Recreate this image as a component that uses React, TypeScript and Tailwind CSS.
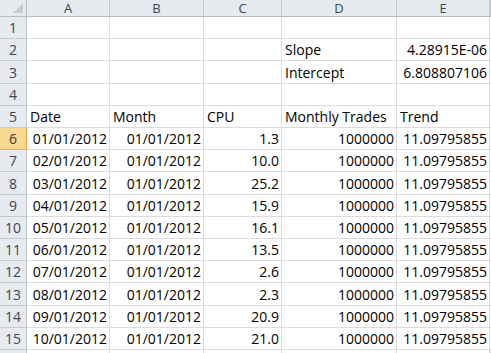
const cols = "grid grid-cols-[27px_83px_94px_78px_115px_93px_1fr]";

type Cell = { v: string; right?: boolean };

const rows: { h: string; cells: Cell[] }[] = [
  { h: "h-[22px]", cells: [] },
  { h: "h-[22px]", cells: [{ v: "" }, { v: "" }, { v: "" }, { v: "Slope" }, { v: "4.28915E-06", right: true }] },
  { h: "h-[23px]", cells: [{ v: "" }, { v: "" }, { v: "" }, { v: "Intercept" }, { v: "6.808807106", right: true }] },
  { h: "h-[22px]", cells: [] },
  { h: "h-[22px]", cells: [{ v: "Date" }, { v: "Month" }, { v: "CPU" }, { v: "Monthly Trades" }, { v: "Trend" }] },
];

const data = [
  ["01/01/2012", "1.3"],
  ["02/01/2012", "10.0"],
  ["03/01/2012", "25.2"],
  ["04/01/2012", "15.9"],
  ["05/01/2012", "16.1"],
  ["06/01/2012", "13.5"],
  ["07/01/2012", "2.6"],
  ["08/01/2012", "2.3"],
  ["09/01/2012", "20.9"],
  ["10/01/2012", "21.0"],
];
const dataHeights = ["h-[22px]", "h-[22px]", "h-[23px]", "h-[22px]", "h-[22px]", "h-[22px]", "h-[22px]", "h-[23px]", "h-[22px]", "h-[22px]"];

data.forEach(([d, cpu], i) => {
  rows.push({
    h: dataHeights[i],
    cells: [
      { v: d, right: true },
      { v: "01/01/2012", right: true },
      { v: cpu, right: true },
      { v: "1000000", right: true },
      { v: "11.09795855", right: true },
    ],
  });
});

function RowHead({ n, active }: { n?: number; active?: boolean }) {
  return (
    <div
      className={
        active
          ? "flex items-center justify-center border-r border-b border-r-[#f2a53a] border-b-[#e8b25e] bg-[#f9d98f] text-[#3a3a3a]"
          : "flex items-center justify-center border-r border-b border-[#c6cacf] bg-[#e7eaee] text-[#3d4650]"
      }
    >
      {n}
    </div>
  );
}

export default function App() {
  return (
    <div className="w-[491px] h-[353px] overflow-hidden bg-white text-[14px] text-black" style={{ fontFamily: '"Open Sans", "Liberation Sans", sans-serif' }}>
      {/* column headers */}
      <div className={`${cols} h-[17px] text-[13px] leading-none text-[#3d4650]`}>
        <div className="relative border-r border-b border-[#b8bcc2] bg-[#e7eaee]">
          <div className="absolute right-[3px] bottom-[3px] w-0 h-0 border-l-[10px] border-l-transparent border-b-[10px] border-b-[#c9ccd0]" />
        </div>
        {["A", "B", "C", "D", "E", ""].map((c, i) => (
          <div key={i} className="flex items-center justify-center border-r border-b border-r-[#c6cacf] border-b-[#b8bcc2] bg-[#e7eaee]">
            {c}
          </div>
        ))}
      </div>

      {rows.map((r, i) => (
        <div key={i} className={`${cols} ${r.h}`}>
          <RowHead n={i + 1} active={i === 5} />
          {[0, 1, 2, 3, 4, 5].map((j) => {
            const c = r.cells[j];
            return (
              <div
                key={j}
                className={`flex items-end overflow-visible whitespace-nowrap border-r border-b border-[#dadcdd] leading-[19px] pb-[1px] ${
                  c?.right ? "justify-end pr-[2px]" : "justify-start pl-[3px]"
                }`}
              >
                {c?.v}
              </div>
            );
          })}
        </div>
      ))}

      {/* partially visible row 16 */}
      <div className={`${cols} h-[22px]`}>
        <RowHead />
        {[0, 1, 2, 3, 4, 5].map((j) => (
          <div key={j} className="border-r border-b border-[#dadcdd]" />
        ))}
      </div>
    </div>
  );
}
